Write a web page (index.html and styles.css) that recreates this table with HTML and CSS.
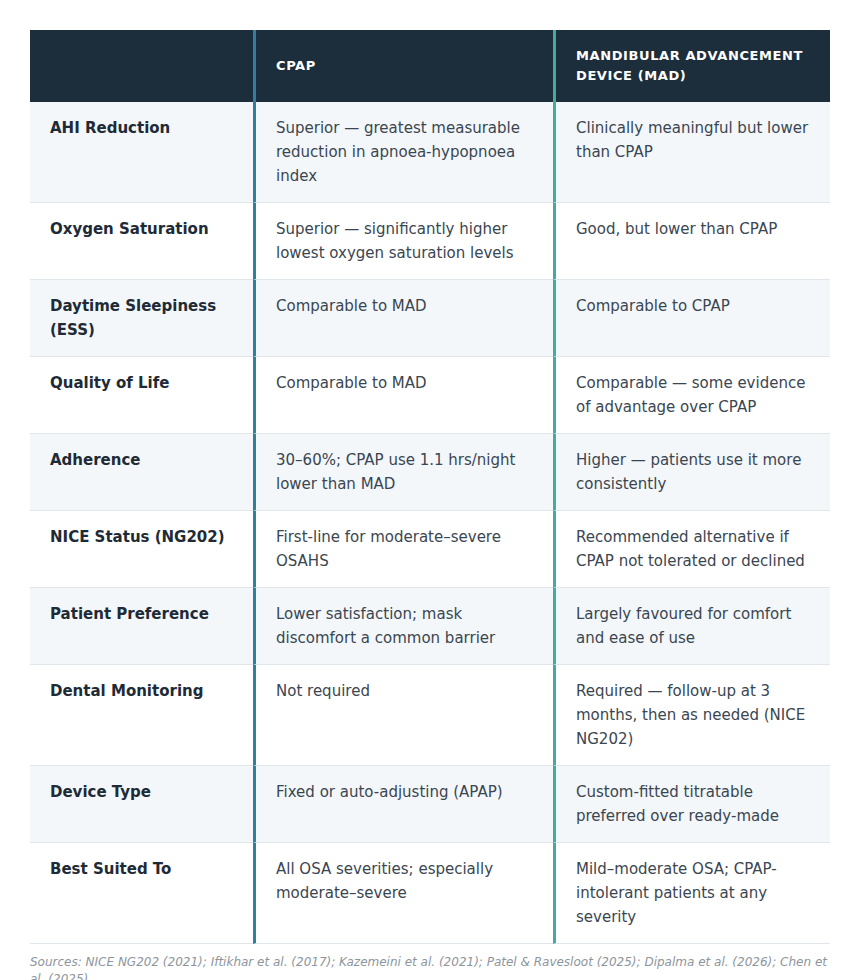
FILE: index.html
```html
<!DOCTYPE html>
<html lang="en">
<head>
<meta charset="utf-8">
<title>CPAP vs MAD</title>
<link rel="stylesheet" href="styles.css">
</head>
<body>
<div class="page">
  <table class="cmp">
    <colgroup>
      <col class="c1"><col class="c2"><col class="c3">
    </colgroup>
    <thead>
      <tr>
        <th></th>
        <th class="cpap">CPAP</th>
        <th class="mad">Mandibular Advancement Device (MAD)</th>
      </tr>
    </thead>
    <tbody>
      <tr><td class="lbl">AHI Reduction</td><td class="cpap">Superior — greatest measurable reduction in apnoea-hypopnoea index</td><td class="mad">Clinically meaningful but lower than CPAP</td></tr>
      <tr><td class="lbl">Oxygen Saturation</td><td class="cpap">Superior — significantly higher lowest oxygen saturation levels</td><td class="mad">Good, but lower than CPAP</td></tr>
      <tr><td class="lbl">Daytime Sleepiness (ESS)</td><td class="cpap">Comparable to MAD</td><td class="mad">Comparable to CPAP</td></tr>
      <tr><td class="lbl">Quality of Life</td><td class="cpap">Comparable to MAD</td><td class="mad">Comparable — some evidence of advantage over CPAP</td></tr>
      <tr><td class="lbl">Adherence</td><td class="cpap">30–60%; CPAP use 1.1 hrs/night lower than MAD</td><td class="mad">Higher — patients use it more consistently</td></tr>
      <tr><td class="lbl">NICE Status (NG202)</td><td class="cpap">First-line for moderate–severe OSAHS</td><td class="mad">Recommended alternative if CPAP not tolerated or declined</td></tr>
      <tr><td class="lbl">Patient Preference</td><td class="cpap">Lower satisfaction; mask discomfort a common barrier</td><td class="mad">Largely favoured for comfort and ease of use</td></tr>
      <tr><td class="lbl">Dental Monitoring</td><td class="cpap">Not required</td><td class="mad">Required — follow-up at 3 months, then as needed (NICE NG202)</td></tr>
      <tr><td class="lbl">Device Type</td><td class="cpap">Fixed or auto-adjusting (APAP)</td><td class="mad">Custom-fitted titratable preferred over ready-made</td></tr>
      <tr><td class="lbl">Best Suited To</td><td class="cpap">All OSA severities; especially moderate–severe</td><td class="mad">Mild–moderate OSA; CPAP-intolerant patients at any severity</td></tr>
    </tbody>
  </table>
  <p class="sources">Sources: NICE NG202 (2021); Iftikhar et al. (2017); Kazemeini et al. (2021); Patel &amp; Ravesloot (2025); Dipalma et al. (2026); Chen et al. (2025)</p>
</div>
</body>
</html>
```

FILE: styles.css
```css
html, body {
  margin: 0;
  padding: 0;
  background: #ffffff;
}
body {
  font-family: "DejaVu Sans", "Liberation Sans", sans-serif;
  color: #3a4651;
}
.page {
  padding: 30px 30px 0 30px;
}
.cmp {
  width: 800px;
  border-collapse: separate;
  border-spacing: 0;
  table-layout: fixed;
}
.c1 { width: 223px; }
.c2 { width: 300px; }
.c3 { width: 277px; }

.cmp th {
  background: #1c2e3b;
  color: #ffffff;
  font-size: 13px;
  font-weight: bold;
  line-height: 20px;
  letter-spacing: 0.6px;
  text-transform: uppercase;
  text-align: left;
  vertical-align: middle;
  padding: 16px 20px;
  height: 40px;
}
.cmp td {
  font-size: 15px;
  line-height: 24px;
  vertical-align: top;
  padding: 14px 20px;
  border-bottom: 1px solid #e1e6eb;
}
.cmp tbody tr:nth-child(odd) td {
  background: #f3f7fa;
}
.cmp td.lbl {
  font-weight: bold;
  color: #1e2b36;
}
.cmp .cpap {
  border-left: 3px solid #2f7fa0;
}
.cmp .mad {
  border-left: 3px solid #46aaa1;
}
.sources {
  margin: 10px 0 0 0;
  font-size: 12px;
  line-height: 17px;
  font-style: italic;
  color: #8d959c;
}
```
